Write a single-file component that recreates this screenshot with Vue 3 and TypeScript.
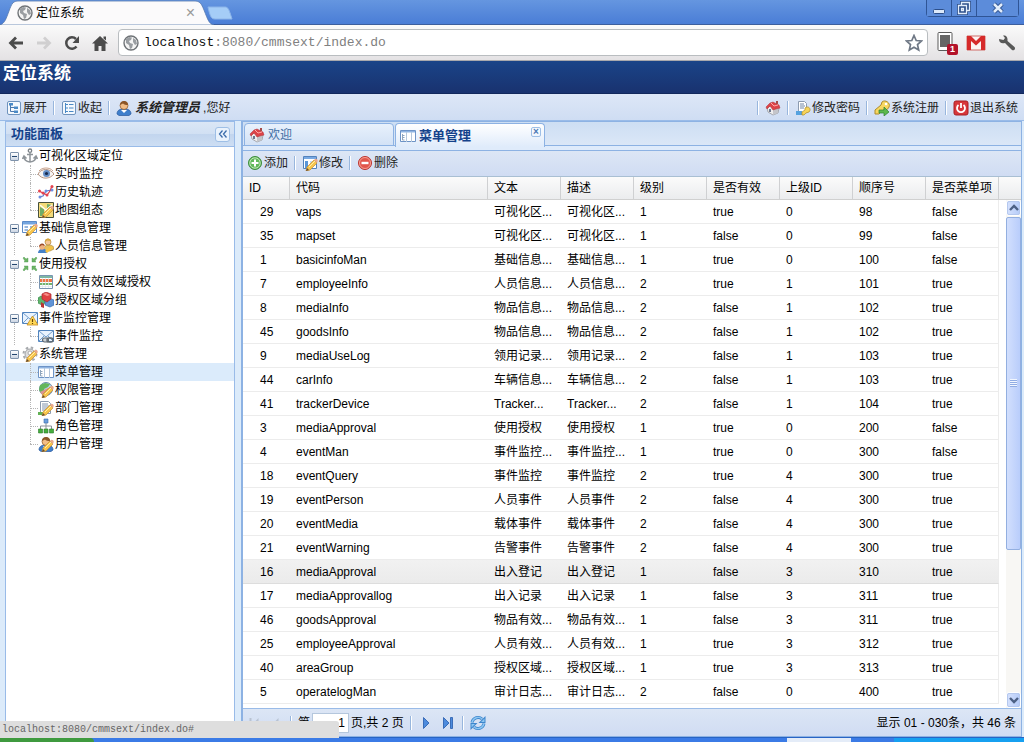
<script setup lang="ts">
import { ref } from 'vue'

interface TreeLeaf { text: string; icon: string; active?: boolean }
interface TreeGroup { text: string; icon: string; children: TreeLeaf[] }

const tree: TreeGroup[] = [
  { text: '可视化区域定位', icon: 'anchor', children: [
    { text: '实时监控', icon: 'eye' },
    { text: '历史轨迹', icon: 'track' },
    { text: '地图组态', icon: 'map' },
  ] },
  { text: '基础信息管理', icon: 'formedit', children: [{ text: '人员信息管理', icon: 'people' }] },
  { text: '使用授权', icon: 'shrink', children: [
    { text: '人员有效区域授权', icon: 'calendar' },
    { text: '授权区域分组', icon: 'cubes' },
  ] },
  { text: '事件监控管理', icon: 'mailwarn', children: [{ text: '事件监控', icon: 'maillink' }] },
  { text: '系统管理', icon: 'gear', children: [
    { text: '菜单管理', icon: 'menu', active: true },
    { text: '权限管理', icon: 'world' },
    { text: '部门管理', icon: 'pageedit' },
    { text: '角色管理', icon: 'org' },
    { text: '用户管理', icon: 'useredit' },
  ] },
]

const columns: string[] = ['ID', '代码', '文本', '描述', '级别', '是否有效', '上级ID', '顺序号', '是否菜单项']

const rows: string[][] = [
  ['29', 'vaps', '可视化区...', '可视化区...', '1', 'true', '0', '98', 'false'],
  ['35', 'mapset', '可视化区...', '可视化区...', '1', 'false', '0', '99', 'false'],
  ['1', 'basicinfoMan', '基础信息...', '基础信息...', '1', 'true', '0', '100', 'false'],
  ['7', 'employeeInfo', '人员信息...', '人员信息...', '2', 'true', '1', '101', 'true'],
  ['8', 'mediaInfo', '物品信息...', '物品信息...', '2', 'false', '1', '102', 'true'],
  ['45', 'goodsInfo', '物品信息...', '物品信息...', '2', 'false', '1', '102', 'true'],
  ['9', 'mediaUseLog', '领用记录...', '领用记录...', '2', 'false', '1', '103', 'true'],
  ['44', 'carInfo', '车辆信息...', '车辆信息...', '2', 'false', '1', '103', 'true'],
  ['41', 'trackerDevice', 'Tracker...', 'Tracker...', '2', 'false', '1', '104', 'true'],
  ['3', 'mediaApproval', '使用授权', '使用授权', '1', 'true', '0', '200', 'false'],
  ['4', 'eventMan', '事件监控...', '事件监控...', '1', 'true', '0', '300', 'false'],
  ['18', 'eventQuery', '事件监控', '事件监控', '2', 'true', '4', '300', 'true'],
  ['19', 'eventPerson', '人员事件', '人员事件', '2', 'false', '4', '300', 'true'],
  ['20', 'eventMedia', '载体事件', '载体事件', '2', 'false', '4', '300', 'true'],
  ['21', 'eventWarning', '告警事件', '告警事件', '2', 'false', '4', '300', 'true'],
  ['16', 'mediaApproval', '出入登记', '出入登记', '1', 'false', '3', '310', 'true'],
  ['17', 'mediaApprovallog', '出入记录', '出入记录', '1', 'false', '3', '311', 'true'],
  ['46', 'goodsApproval', '物品有效...', '物品有效...', '1', 'false', '3', '311', 'true'],
  ['25', 'employeeApproval', '人员有效...', '人员有效...', '1', 'true', '3', '312', 'true'],
  ['40', 'areaGroup', '授权区域...', '授权区域...', '1', 'true', '3', '313', 'true'],
  ['5', 'operatelogMan', '审计日志...', '审计日志...', '2', 'false', '0', '400', 'true'],
]
const hovered = 15
const page = ref('1')
</script>

<template>
  <div class="page">
    <svg class="defs" aria-hidden="true">
      <symbol id="i-globe" viewBox="0 0 16 16">
        <circle cx="8" cy="8" r="7" fill="#f4f4f4" stroke="#6f7377" stroke-width="1.4" />
        <path d="M3 4l3-2 3 .5L8 5 6 6l1 2 3 1-1 4-2 1-1-4-3-2zM10 3l3 2 1 4-2 1-2-3z" fill="#9a9ea2" />
      </symbol>
      <symbol id="i-expand" viewBox="0 0 16 16">
        <rect x="1.5" y="1.5" width="13" height="13" rx="1.5" fill="#f4f8fd" stroke="#6f93bd" />
        <path d="M4.500 5v6.500h4M4.500 7.500h4" fill="none" stroke="#4b78ae" />
        <path d="M3 3h4v2.500H3zM8 6.500h4V9H8zM8 10.500h4V13H8z" fill="#4b8ac6" />
      </symbol>
      <symbol id="i-collapse" viewBox="0 0 16 16">
        <rect x="1.500" y="1.500" width="13" height="13" rx="1.500" fill="#f4f8fd" stroke="#6f93bd" />
        <path d="M4.500 3v10M4.500 4.500H7M4.500 8H7M4.500 11.500H7M8 4.500h4.500M8 8h4.500M8 11.500h4.500" fill="none" stroke="#4b8ac6" />
      </symbol>
      <symbol id="i-user" viewBox="0 0 16 16">
        <path d="M1 14c0-4 3-5 7-5s7 1 7 5l-2 1.500H3z" fill="#3f7fcc" stroke="#28589c" stroke-width=".7" />
        <path d="M5 10l3 3 3-3z" fill="#fff" />
        <circle cx="8" cy="5.500" r="4" fill="#f2bd86" stroke="#8b5527" stroke-width=".7" />
        <path d="M4 5c0-5 8-5.500 8 0-2 0-4-.5-5-1.500z" fill="#8b5527" />
      </symbol>
      <symbol id="i-house" viewBox="0 0 16 16">
        <path d="M2 8l5-3 7 3-1 5-5 2-5-3z" fill="#eeeeef" stroke="#8b8d92" stroke-width=".7" />
        <path d="M8 15V9l5-2v6z" fill="#c4c5ca" />
        <path d="M1 7l4-4 3-1 6 3 1 3-4 1-3 1-3-4-3 3z" fill="#dc4348" stroke="#b03338" stroke-width=".5" />
        <path d="M11 1h2v3h-2z" fill="#a54b48" /><path d="M6 3l3 3 4-1" fill="none" stroke="#ffaaa8" />
        <path d="M4 9h2v3H4z" fill="#6c7890" />
      </symbol>
      <symbol id="i-pencil" viewBox="0 0 16 16">
        <path d="M5 12l7-7 3 3-7 7-4 1z" fill="#f7c54d" stroke="#c48c33" stroke-width=".7" />
        <path d="M7 12l6-6" stroke="#fff0a8" /><path d="M12 5l1-1c1-1 3.500 1 2.500 2.500L15 8z" fill="#e9a98b" /><path d="M4 16l1-3 2 2z" fill="#624b35" />
      </symbol>
      <symbol id="i-pageedit" viewBox="0 0 16 16">
        <path d="M2.500 1.500h8l2 2v10h-10z" fill="#fff" stroke="#8c9bb0" />
        <path d="M4 4h6M4 6h7M4 8h7M4 10h5" stroke="#7186a4" stroke-width=".9" />
        <path d="M0 12h6v3H0z" fill="#62b154" /><use href="#i-pencil" />
      </symbol>
      <symbol id="i-pagekey" viewBox="0 0 16 16">
        <path d="M3.500 1.500h6l2 2v9h-8z" fill="#fff" stroke="#8c9bb0" />
        <path d="M5 4h4M5 6h5M5 8h4" stroke="#7186a4" /><path d="M1 11h6v4H1z" fill="#56a2df" />
        <path d="M10 8c3-3 7 1 4 4l-3 1-2 2H7v-3l3-2z" fill="#f6d45a" stroke="#b28c24" stroke-width=".7" />
      </symbol>
      <symbol id="i-keygo" viewBox="0 0 16 16">
        <path d="M8 2c3-3 9 1 7 5-1 3-4 3-6 3l-4 4H1v-4l6-5z" fill="#f7d760" stroke="#ae8b2a" />
        <circle cx="12" cy="4" r="1.300" fill="#fff" />
        <path d="M5 10h5V7l5 5-5 4v-3H5z" fill="#5bb84c" stroke="#2f8030" stroke-width=".7" />
      </symbol>
      <symbol id="i-power" viewBox="0 0 16 16">
        <rect x="1" y="1" width="14" height="14" rx="2" fill="#d7373b" stroke="#a91e23" />
        <path d="M5.500 5a4 4 0 1 0 5 0M8 3v5" fill="none" stroke="#fff" stroke-width="1.800" />
      </symbol>
      <symbol id="i-anchor" viewBox="0 0 16 16">
        <circle cx="8" cy="2.700" r="1.700" fill="none" stroke="#7c8288" stroke-width="1.300" />
        <path d="M8 4.500V14M5 6.500h6M2 8.500c0 3 2.500 5 6 5.500 3.500-.5 6-2.500 6-5.500M.5 11L2 8l2.500 2.500M15.500 11L14 8l-2.500 2.500" fill="none" stroke="#8e9499" stroke-width="1.500" />
      </symbol>
      <symbol id="i-eye" viewBox="0 0 16 16">
        <path d="M0 8c3-6 12-6 16 0-4 5-12 6-16 0z" fill="#f7f5f3" stroke="#b79582" />
        <circle cx="8.500" cy="7.500" r="3.500" fill="#638dc5" /><circle cx="8.500" cy="7.500" r="1.600" fill="#192b4d" />
        <path d="M1 5c3-4 11-4 14 0" fill="none" stroke="#c9a48e" />
      </symbol>
      <symbol id="i-track" viewBox="0 0 16 16">
        <path d="M1 13l4-1 3-5 6-1" stroke="#5b77c7" fill="none" stroke-width="1.200" />
        <path d="M1 7l4 2 4 2 3-4 2-5" stroke="#df3640" fill="none" stroke-width="1.200" />
        <g fill="#e54450"><circle cx="1.500" cy="7" r="1.500" /><circle cx="5" cy="9" r="1.500" /><circle cx="9" cy="11" r="1.500" /><circle cx="14" cy="2.500" r="1.500" /></g>
        <g fill="#6c8de0"><circle cx="2" cy="13" r="1.500" /><circle cx="8" cy="7" r="1.500" /><circle cx="14" cy="6" r="1.500" /></g>
      </symbol>
      <symbol id="i-map" viewBox="0 0 16 16">
        <path d="M.5.5h15v15H.5z" fill="#f3db79" stroke="#47513c" />
        <path d="M2 5l4 2v7H2zM9 2l5 1v5H9z" fill="#70ad67" /><path d="M2 3l6 5 6-5M8 8v7" stroke="#fffdf0" stroke-width="1.500" fill="none" /><use href="#i-pencil" />
      </symbol>
      <symbol id="i-formedit" viewBox="0 0 16 16">
        <path d="M.5 1.500h14v11H.5z" fill="#fff" stroke="#5c8bc8" /><path d="M1 2h13v2.500H1z" fill="#74a5df" />
        <path d="M2.500 7H6M2.500 10H6M8 7h4" stroke="#769fd2" stroke-width="1.500" /><use href="#i-pencil" />
      </symbol>
      <symbol id="i-people" viewBox="0 0 16 16">
        <path d="M6 13c0-5 2-6 4-6s6 0 6 4l-4 2z" fill="#e6c05c" stroke="#aa8130" stroke-width=".6" />
        <circle cx="10" cy="4" r="3" fill="#f5c695" stroke="#b38636" stroke-width=".7" /><path d="M7 4c0-5 6-4 6-1l-4-.5z" fill="#d5a63e" />
        <path d="M0 15c0-5 9-6 9 0z" fill="#4681c8" /><circle cx="4" cy="9" r="2.700" fill="#efb27f" /><path d="M1 9c0-4 5-5 6-1l-3-1z" fill="#9b4c2b" /><path d="M7 13l6-5 2 2-6 5z" fill="#f6c343" />
      </symbol>
      <symbol id="i-shrink" viewBox="0 0 16 16">
        <g fill="#6db565" stroke="#4a964d" stroke-width=".4">
          <path d="M1 2l1-1 2 2 2-1v4H2l1-1zM15 2l-1-1-2 2-2-1v4h4l-1-1zM1 14l1 1 2-2 2 1v-4H2l1 1zM15 14l-1 1-2-2-2 1v-4h4l-1 1z" />
        </g>
      </symbol>
      <symbol id="i-calendar" viewBox="0 0 16 16">
        <path d="M1.500 1.500h13v13h-13z" fill="#fff" stroke="#7894b1" /><path d="M2 2h12v2H2z" fill="#7fb7a3" /><path d="M2 5h12v3H2z" fill="#ee7545" /><path d="M2 9h12v2H2z" fill="#72b36c" />
        <path d="M4.500 4v10M7.500 4v10M10.500 4v10M2 12.500h12" stroke="#dce5ee" stroke-width=".7" />
      </symbol>
      <symbol id="i-cubes" viewBox="0 0 16 16">
        <path d="M0 6l3-2 4 2v5l-3 2-4-2z" fill="#62b56c" stroke="#36864b" stroke-width=".7" />
        <path d="M7 8l4-2 5 2v5l-4 2-5-2z" fill="#6194d6" stroke="#376cae" stroke-width=".7" />
        <path d="M4 2l4-2 5 2v5L9 10 4 7z" fill="#df4343" stroke="#aa2832" stroke-width=".7" /><path d="M5 2l3-1 4 2-3 1z" fill="#f79089" /><path d="M3 10l3 2v4l-3-1z" fill="#b33" />
      </symbol>
      <symbol id="i-mail" viewBox="0 0 16 16">
        <path d="M.5 2.500h15v11H.5z" fill="#e9f3fe" stroke="#5285bf" /><path d="M1 3l7 6 7-6M1 13l5-5M15 13l-5-5" fill="none" stroke="#719dcc" />
      </symbol>
      <symbol id="i-mailwarn" viewBox="0 0 16 16"><use href="#i-mail" /><path d="M10.500 6L16 15H5z" fill="#ffd857" stroke="#c78c21" stroke-width=".8" /><path d="M10.500 9v3M10.500 13v1" stroke="#654408" stroke-width="1.200" /></symbol>
      <symbol id="i-maillink" viewBox="0 0 16 16"><use href="#i-mail" /><rect x="4.500" y="10" width="6" height="4" rx="2" fill="#ccd2d7" stroke="#5f6970" stroke-width="1.200" /><rect x="9" y="10" width="6" height="4" rx="2" fill="none" stroke="#5f6970" stroke-width="1.400" /></symbol>
      <symbol id="i-gear" viewBox="0 0 16 16">
        <circle cx="8" cy="8" r="5" fill="#dedede" stroke="#a0a3a7" /><circle cx="8" cy="8" r="6.500" fill="none" stroke="#a8abae" stroke-width="2" stroke-dasharray="2.500 2.600" />
        <circle cx="8" cy="7" r="2" fill="#fff" stroke="#aaa" /><use href="#i-pencil" />
      </symbol>
      <symbol id="i-menu" viewBox="0 0 16 16">
        <path d="M.5 2.500h15v11H.5z" fill="#fff" stroke="#6d93c6" /><path d="M1 3h14v1.500H1z" fill="#8fb4e2" /><path d="M6.500 4v10M11.500 4v10" stroke="#b4c7dc" /><path d="M2.500 6v6h2M2.500 7.500h2M2.500 9.500h2" fill="none" stroke="#8fa5bd" />
      </symbol>
      <symbol id="i-world" viewBox="0 0 16 16">
        <circle cx="8" cy="7" r="6.500" fill="#b5d3ec" stroke="#698eac" /><path d="M2 3l5-2 5 1-2 3-4 2 1 4-3 1-3-4z" fill="#64b65b" /><path d="M2 10l8-4 2 4-6 5z" fill="#dd9490" /><use href="#i-pencil" />
      </symbol>
      <symbol id="i-org" viewBox="0 0 16 16">
        <path d="M8 4v4M2.500 11V8h11v3M8 8v3" fill="none" stroke="#8b9299" /><path d="M6 1h4v4H6z" fill="#6c9edd" stroke="#356cad" stroke-width=".6" /><path d="M.500 11h4v4h-4zM6 11h4v4H6zM11.500 11h4v4h-4z" fill="#46ae3e" stroke="#2b7a2c" stroke-width=".6" />
      </symbol>
      <symbol id="i-useredit" viewBox="0 0 16 16"><use href="#i-user" /><use href="#i-pencil" /></symbol>
      <symbol id="i-add" viewBox="0 0 16 16"><circle cx="8" cy="8" r="6.500" fill="#62b95c" stroke="#3c8c3c" /><circle cx="8" cy="8" r="5.200" fill="none" stroke="#c2e6b8" /><path d="M8 4.500v7M4.500 8h7" stroke="#fff" stroke-width="2" /></symbol>
      <symbol id="i-del" viewBox="0 0 16 16"><circle cx="8" cy="8" r="6.500" fill="#e2564c" stroke="#bb3430" /><circle cx="8" cy="8" r="5.500" fill="none" stroke="#f49f91" /><path d="M4.500 8h7" stroke="#fff" stroke-width="2.400" /></symbol>
      <symbol id="i-edit" viewBox="0 0 16 16"><path d="M1.500 1.500h13v12h-13z" fill="#fff" stroke="#5382bb" /><path d="M2 2h12v2H2z" fill="#78a9e3" /><path d="M3 6h3v7H3z" fill="#5a95d6" /><path d="M8 6h5v5H8z" fill="#c7daf1" /><use href="#i-pencil" /></symbol>
      <symbol id="i-next" viewBox="0 0 16 16"><path d="M5.500 2.500L11 8l-5.500 5.500z" fill="#4d8bdd" stroke="#255aac" stroke-width=".8" /></symbol>
      <symbol id="i-last" viewBox="0 0 16 16"><path d="M3.500 2.500L9 8l-5.500 5.500zM10.500 2.500h2v11h-2z" fill="#4d8bdd" stroke="#255aac" stroke-width=".8" /></symbol>
      <symbol id="i-refresh" viewBox="0 0 16 16">
        <path d="M2 7.500C3 2.500 9 1 12 4" fill="none" stroke="#3d86cc" stroke-width="3" /><path d="M15.500 1v7H8.500z" fill="#3d86cc" />
        <path d="M2 7.500C3 2.500 9 1 12 4" fill="none" stroke="#8cc6f2" stroke-width="1.400" /><path d="M14.500 3.500V7H11z" fill="#8cc6f2" />
        <path d="M14 8.500C13 13.500 7 15 4 12" fill="none" stroke="#3d86cc" stroke-width="3" /><path d="M.5 15V8h7z" fill="#3d86cc" />
        <path d="M14 8.500C13 13.500 7 15 4 12" fill="none" stroke="#8cc6f2" stroke-width="1.400" /><path d="M1.500 12.500V9H5z" fill="#8cc6f2" />
      </symbol>
    </svg>

    <div class="titlebar">
      <div class="tab">
        <svg class="tabshape" viewBox="0 0 214 25" preserveAspectRatio="none" aria-hidden="true">
          <path d="M0 25C5 23 6 19 9 11 12 3 13 1 19 1H194C200 1 201 3 204 10 208 20 209 24 214 25z" fill="#fbfafb" stroke="#5578ae" stroke-width=".8" />
        </svg>
        <svg class="ic"><use href="#i-globe" /></svg>
        <span>定位系统</span>
        <button class="tabclose" aria-label="关闭标签页">×</button>
      </div>
      <button class="newtab" aria-label="新标签页"><svg viewBox="0 0 26 14"><path d="M1 1h17c3 0 4 2 7 12H8C4 13 3 10 1 1z" fill="#a5cdf7" stroke="#8cb4e9" /></svg></button>
      <div class="winbtns">
        <button aria-label="最小化"><svg viewBox="0 0 14 14"><rect x="1.500" y="8.500" width="11" height="4" rx="1" fill="#dce9fa" stroke="#2c4f8b" /></svg></button>
        <button aria-label="还原"><svg viewBox="0 0 14 14"><path d="M4.500 4V1.500h8v8H10M1.500 4.500h8v8h-8zM4.500 7.500h2v2h-2z" fill="none" stroke="#2c4f8b" stroke-width="3" /><path d="M4.500 4V1.500h8v8H10M1.500 4.500h8v8h-8zM4.500 7.500h2v2h-2z" fill="none" stroke="#e2edfb" stroke-width="1.300" /></svg></button>
        <button class="wide" aria-label="关闭"><svg viewBox="0 0 14 14"><path d="M3 3l8 8M11 3l-8 8" stroke="#2c4f8b" stroke-width="4.500" /><path d="M3 3l8 8M11 3l-8 8" stroke="#e2edfb" stroke-width="2.500" /></svg></button>
      </div>
    </div>

    <div class="navbar">
      <button aria-label="后退"><svg viewBox="0 0 16 16"><path d="M15 8H3M8 2.500L2.500 8 8 13.500" fill="none" stroke="#4b4b4b" stroke-width="2.800" /></svg></button>
      <button aria-label="前进"><svg viewBox="0 0 16 16"><path d="M1 8h12M8 2.500L13.500 8 8 13.500" fill="none" stroke="#d0cfd0" stroke-width="2.800" /></svg></button>
      <button aria-label="刷新"><svg viewBox="0 0 16 16"><path d="M12.500 11.500A5.700 5.700 0 1 1 12 4" fill="none" stroke="#4b4b4b" stroke-width="2.500" /><path d="M15 1v7H8.500z" fill="#4b4b4b" /></svg></button>
      <button aria-label="主页"><svg viewBox="0 0 16 16"><path d="M8 1l8 7.500h-2.500V16h-4v-5h-3v5h-4V8.500H0zM11.500 1.500h2.500v4l-2.500-2z" fill="#4b4b4b" /></svg></button>
      <div class="omnibox">
        <svg class="ic"><use href="#i-globe" /></svg>
        <span class="url"><b>localhost</b>:8080/cmmsext/index.do</span>
        <button aria-label="收藏"><svg viewBox="0 0 18 18"><path d="M9 1.500l2.200 5 5.300.5-4 3.600 1.200 5.400L9 13.200 4.300 16l1.200-5.400-4-3.600 5.300-.5z" fill="#fff" stroke="#6f7885" stroke-width="1.700" /></svg></button>
      </div>
      <button class="ext" aria-label="扩展程序"><svg viewBox="0 0 20 22"><rect x="1" y=".5" width="14" height="18" rx="1" fill="#fff" stroke="#5b5b5b" /><rect x="3" y="3" width="10" height="12" fill="#666" /></svg><i>1</i></button>
      <button class="gmail" aria-label="邮件"><svg viewBox="0 0 20 16"><path d="M1 1h18v14H1z" fill="#fbf3f2" stroke="#cf6a66" /><path d="M1 1h4l5 5 5-5h4v14h-4V6l-5 4.500L5 6v9H1z" fill="#d62a2a" /></svg></button>
      <button class="wrench" aria-label="设置"><svg viewBox="0 0 18 18"><path d="M1 5c0 4 3 5 6 4l7 7c2 1 4-1 2.500-3L9.500 7C10 3 8 1 5 1.500L7 4 5.500 6z" fill="#585858" /></svg></button>
    </div>

    <header class="banner"><h1>定位系统</h1></header>

    <div class="appbar">
      <button><svg class="ic"><use href="#i-expand" /></svg>展开</button><i class="sep" />
      <button><svg class="ic"><use href="#i-collapse" /></svg>收起</button><i class="sep" />
      <span class="who"><svg class="ic"><use href="#i-user" /></svg><b>系统管理员</b>,您好</span>
      <span class="grow" />
      <i class="sep" /><button aria-label="首页"><svg class="ic"><use href="#i-house" /></svg></button>
      <i class="sep" /><button><svg class="ic"><use href="#i-pagekey" /></svg>修改密码</button>
      <i class="sep" /><button><svg class="ic"><use href="#i-keygo" /></svg>系统注册</button>
      <i class="sep" /><button><svg class="ic"><use href="#i-power" /></svg>退出系统</button>
    </div>

    <div class="work">
      <aside class="side">
        <div class="sidehead"><h2>功能面板</h2><button aria-label="折叠面板"><svg viewBox="0 0 10 10"><path d="M4.500 1.500L1.500 5l3 3.500M8.500 1.500L5.500 5l3 3.500" fill="none" stroke="#3b6cab" stroke-width="1.300" /></svg></button></div>
        <ul class="tree">
          <li v-for="g in tree" :key="g.text" class="group">
            <div class="node">
              <button class="toggle" aria-label="折叠" />
              <svg class="ic"><use :href="'#i-' + g.icon" /></svg><span>{{ g.text }}</span>
            </div>
            <ul>
              <li v-for="c in g.children" :key="c.text" class="leaf" :class="{ active: c.active }">
                <a href="#"><svg class="ic"><use :href="'#i-' + c.icon" /></svg><span>{{ c.text }}</span></a>
              </li>
            </ul>
          </li>
        </ul>
      </aside>

      <main class="main">
        <div class="tabs">
          <button class="ptab"><svg class="ic"><use href="#i-house" /></svg>欢迎</button>
          <div class="ptab on"><svg class="ic"><use href="#i-menu" /></svg>菜单管理<button class="x" aria-label="关闭">×</button></div>
        </div>
        <div class="toolbar">
          <button><svg class="ic"><use href="#i-add" /></svg>添加</button><i class="sep" />
          <button><svg class="ic"><use href="#i-edit" /></svg>修改</button><i class="sep" />
          <button><svg class="ic"><use href="#i-del" /></svg>删除</button>
        </div>
        <div class="gridbox">
          <table>
            <colgroup><col class="cid"><col><col v-for="n in 7" :key="n" class="cn"></colgroup>
            <thead><tr><th v-for="c in columns" :key="c" scope="col">{{ c }}</th></tr></thead>
            <tbody>
              <tr v-for="(r, i) in rows" :key="i" :class="{ hover: i === hovered }"><td v-for="(v, j) in r" :key="j">{{ v }}</td></tr>
            </tbody>
          </table>
          <div class="scroll">
            <button aria-label="向上滚动"><svg viewBox="0 0 10 8"><path d="M1 6l4-4 4 4" fill="none" stroke="#4d6185" stroke-width="2.400" /></svg></button>
            <div class="track"><div class="thumb"><i /></div></div>
            <button aria-label="向下滚动"><svg viewBox="0 0 10 8"><path d="M1 2l4 4 4-4" fill="none" stroke="#4d6185" stroke-width="2.400" /></svg></button>
          </div>
        </div>
        <div class="pager">
          <button aria-label="首页" disabled><svg class="ic" viewBox="0 0 16 16"><path d="M12.500 3l-5 5 5 5zM3.500 3h2v10h-2z" fill="#b9c3d2" /></svg></button>
          <button aria-label="上一页" disabled><svg class="ic" viewBox="0 0 16 16"><path d="M10.500 3l-5 5 5 5z" fill="#b9c3d2" /></svg></button>
          <i class="sep" /><label for="pageno">第</label><input id="pageno" v-model="page" type="text"><span>页,共 2 页</span>
          <i class="sep" /><button aria-label="下一页"><svg class="ic"><use href="#i-next" /></svg></button>
          <button aria-label="末页"><svg class="ic"><use href="#i-last" /></svg></button>
          <i class="sep" /><button aria-label="刷新"><svg class="ic"><use href="#i-refresh" /></svg></button>
          <span class="grow" /><span>显示 01 - 030条，共 46 条</span>
        </div>
      </main>
    </div>
    <div class="taskbar"><i class="start" /><i class="mid" /><i class="task" /><i class="tray" /></div>
    <div class="status">localhost:8080/cmmsext/index.do#</div>
  </div>
</template>

<style>
html, body { margin: 0; background: #dfe8f6; }
</style>

<style scoped>
* { box-sizing: border-box; }
.page { height: 100vh; display: flex; flex-direction: column; position: relative; overflow: hidden; font: 12px/18px "Liberation Sans", "Noto Sans CJK SC", sans-serif; color: #000; white-space: nowrap; }
.defs { position: absolute; width: 0; height: 0; }
button { font: inherit; color: inherit; border: 0; background: none; padding: 0; margin: 0; display: flex; align-items: center; }
svg { display: block; flex: none; }
ul { list-style: none; margin: 0; padding: 0; }
.ic { width: 16px; height: 16px; }
.grow { flex: 1; }

.titlebar { height: 25px; flex: none; display: flex; align-items: flex-start; background: linear-gradient(#6596e0, #4a7dd6); border-bottom: 1px solid #3c5e9d; }
.tab { position: relative; width: 214px; height: 25px; flex: none; display: flex; align-items: center; padding-left: 17px; gap: 3px; }
.tab > * { position: relative; }
.tab > .tabshape { position: absolute; inset: 0; width: 100%; height: 100%; }
.tabclose { margin-left: auto; margin-right: 19px; color: #999; font-size: 16px; }
.newtab { margin: 6px 0 0 -7px; position: relative; }
.newtab svg { width: 26px; height: 14px; }
.winbtns { margin-left: auto; margin-right: 5px; display: flex; height: 17px; border: 1px solid #2f5596; border-top: 0; border-radius: 0 0 4px 4px; }
.winbtns button { width: 25px; justify-content: center; border-right: 1px solid #2f5596; background: #5c8cda; }
.winbtns button.wide { width: 41px; border-right: 0; }
.winbtns svg { width: 14px; height: 14px; }

.navbar { height: 36px; flex: none; display: flex; align-items: center; gap: 12px; padding: 0 8px; background: linear-gradient(#fafafa, #e4e2e4); border-bottom: 1px solid #a9a9ad; }
.navbar button svg { width: 16px; height: 16px; }
.omnibox { flex: 1; height: 27px; display: flex; align-items: center; gap: 5px; padding: 0 4px; border: 1px solid #b9bdc0; border-radius: 4px; background: #fff; margin-left: -2px; margin-right: -3px; }
.url { flex: 1; font: 13px/18px "Liberation Mono", monospace; color: #808080; }
.url b { color: #111; font-weight: normal; }
.omnibox button svg { width: 18px; height: 18px; }
.ext { position: relative; }
.navbar .ext svg { width: 20px; height: 22px; }
.ext i { position: absolute; left: 10px; top: 12px; width: 11px; height: 11px; border-radius: 2px; background: #b3122a; color: #fff; font: bold 9px/11px "Liberation Sans", sans-serif; text-align: center; }
.navbar .gmail { margin-left: -3px; }
.navbar .gmail svg { width: 20px; height: 16px; }
.navbar .wrench svg { width: 18px; height: 18px; }

.banner { height: 33px; flex: none; background: linear-gradient(#1a4488, #19326f); padding: 0 3px; border-bottom: 1px solid #12285c; }
.banner h1 { margin: 0; font-size: 17px; line-height: 25px; color: #fff; }

.appbar { height: 27px; flex: none; display: flex; align-items: center; padding: 1px 6px 0; border-bottom: 1px solid #99bbe8; background: linear-gradient(#dde7f7, #cfddf3); color: #222; }
.appbar button { gap: 1px; }
.sep { width: 2px; height: 14px; flex: none; margin: 0 6px; border-left: 1px solid #98b6dd; border-right: 1px solid #fff; }
.who { display: flex; align-items: center; }
.who b { font-style: italic; font-size: 13px; margin: 0 3px; }

.work { flex: 1; min-height: 0; display: flex; gap: 6px; padding: 0 2px 0 5px; background: #dcebfa; }
.side { width: 230px; flex: none; border: 1px solid #99bbe8; background: #fff; }
.sidehead { height: 25px; display: flex; align-items: center; justify-content: space-between; padding: 0 4px 0 5px; border-bottom: 1px solid #99bbe8; background: linear-gradient(#dbe7f6 0, #d1e0f3 50%, #c2d5ee 51%, #cddef3 100%); }
.sidehead h2 { margin: 0; font-size: 13px; color: #15428b; }
.sidehead button { width: 15px; height: 15px; justify-content: center; border: 1px solid #9ebfe6; border-radius: 3px; background: #e9f2fc; }
.sidehead svg { width: 10px; height: 10px; }
.node, .leaf a { display: flex; align-items: center; height: 18px; }
.node span, .leaf span { margin-left: 1px; }
.group { position: relative; }
.group:not(:last-child)::before { content: ""; position: absolute; left: 8px; top: 14px; bottom: 0; border-left: 1px dotted #b5b5b5; }
.toggle { width: 9px; height: 9px; margin: 0 3px 0 4px; justify-content: center; border: 1px solid #7f93ac; border-radius: 1px; background: linear-gradient(#fff, #cbd5e3); position: relative; }
.toggle::before { content: ""; width: 5px; height: 1px; background: #24466f; }
.leaf { position: relative; padding-left: 32px; }
.leaf::before { content: ""; position: absolute; left: 24px; top: 0; bottom: 0; border-left: 1px dotted #b5b5b5; }
.leaf:last-child::before { bottom: 9px; }
.leaf::after { content: ""; position: absolute; left: 24px; top: 9px; width: 8px; border-top: 1px dotted #b5b5b5; }
.leaf a { color: #000; text-decoration: none; }
.leaf.active { background: #dbebfb; }

.main { flex: 1; min-width: 0; display: flex; flex-direction: column; border: 1px solid #8db2e3; border-left-width: 2px; }
.tabs { height: 29px; flex: none; display: flex; align-items: flex-start; gap: 1px; padding: 1px 1px 0; background: linear-gradient(#cddef3, #dbe7f7 23px, #8db2e3 23px, #8db2e3 24px, #dfebfb 24px); border-bottom: 1px solid #8db2e3; }
.ptab { width: 150px; height: 23px; display: flex; align-items: center; gap: 3px; padding: 0 4px; border: 1px solid #8db2e3; border-radius: 4px 4px 0 0; background: linear-gradient(#e8f1fc, #d3e2f6); color: #416da3; position: relative; }
.ptab.on { height: 24px; border-bottom: 0; background: linear-gradient(#fff, #dfebfb); font-size: 13px; font-weight: bold; color: #15428b; }
.x { position: absolute; right: 3px; top: 3px; width: 10px; height: 10px; justify-content: center; border: 1px solid #9ebfe6; border-radius: 2px; font: bold 10px/8px "Liberation Sans", sans-serif; color: #4b7ab5; }
.toolbar { height: 26px; flex: none; display: flex; align-items: center; padding: 0 4px 1px; background: linear-gradient(#dce6f5, #d0dcf3); border-bottom: 1px solid #a9bfd3; color: #222; }
.toolbar button { gap: 1px; }
.gridbox { flex: 1; min-height: 0; display: flex; align-items: stretch; overflow: hidden; background: linear-gradient(#fbfbfb, #ebecee 22px, #d0d0d0 22px, #d0d0d0 23px, #fff 23px); }
table { flex: 1; min-width: 0; width: 0; align-self: flex-start; table-layout: fixed; border-collapse: separate; border-spacing: 0; }
.cid { width: 47px; }
.cn { width: 73px; }
th { height: 23px; padding: 0 6px; text-align: left; font-weight: normal; border-right: 1px solid #cfd0d2; border-bottom: 1px solid #d0d0d0; overflow: hidden; line-height: 18px; }
td { height: 24px; padding: 0 6px; border-bottom: 1px solid #ececec; line-height: 18px; overflow: hidden; }
td:first-child { padding-left: 17px; }
td:last-child { border-right: 1px solid #ececec; }
.hover td { background: linear-gradient(#f1f1f1, #ebebeb); border-bottom-color: #ddd; }
.scroll { width: 15px; flex: none; margin: 23px 0 0 7px; display: flex; flex-direction: column; background: #f8f7f4; }
.scroll button { height: 16px; flex: none; justify-content: center; border: 1px solid #fff; border-radius: 3px; background: linear-gradient(90deg, #d5e1fd, #b5cbf8); outline: 1px solid #b5c8ee; outline-offset: -2px; }
.scroll svg { width: 10px; height: 8px; }
.track { flex: 1; padding-top: 1px; }
.thumb { height: 70%; display: flex; align-items: center; justify-content: center; border: 1px solid #93afe0; border-radius: 2px; background: linear-gradient(90deg, #d2dffd, #b9cdfb); }
.thumb i { width: 7px; height: 8px; background: repeating-linear-gradient(#f1f6ff 0, #f1f6ff 1px, #91ace3 1px, #91ace3 2px); }
.pager { height: 28px; flex: none; display: flex; align-items: center; padding: 0 5px 0 3px; border-top: 1px solid #99bbe8; background: linear-gradient(#dce6f5, #d0dcf3); }
.pager button + button { margin-left: 6px; }
.pager input { width: 37px; height: 20px; margin: 0 2px; padding: 0 3px; border: 1px solid #b5c7dd; background: #fff; font: inherit; text-align: right; }

.taskbar { height: 5px; flex: none; display: flex; background: #3b7be6; border-top: 1px solid #2864c4; }
.start { width: 94px; background: #3f9a3f; border-radius: 0 4px 0 0; }
.mid { flex: 1; }
.task { width: 64px; margin-right: 43px; background: #e4ecf8; }
.tray { width: 130px; background: #17a0f0; }
.status { position: absolute; left: 0; bottom: 4px; width: 339px; height: 17px; padding-left: 2px; border-radius: 0 3px 0 0; background: #dedede; color: #666; font: 10px/17px "Liberation Mono", monospace; }
</style>
